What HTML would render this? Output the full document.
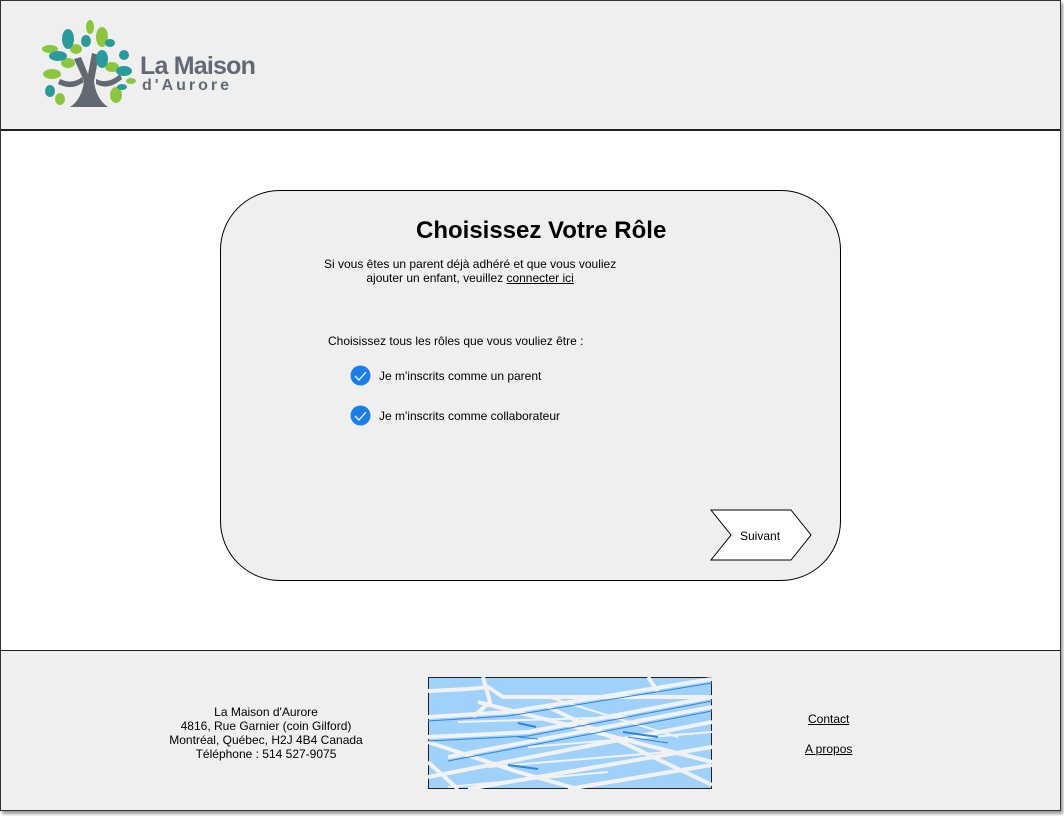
<!DOCTYPE html>
<html><head><meta charset="utf-8"><style>
*{margin:0;padding:0;box-sizing:border-box}
body{width:1064px;height:816px;background:#fff;font-family:"Liberation Sans",Arial,sans-serif;position:relative;overflow:hidden;color:#000}
.frame{position:absolute;left:0;top:0;width:1061px;height:811px;border:1px solid #333;box-shadow:2px 3px 3px #999;background:#fff}
.header{position:absolute;left:1px;top:1px;width:1059px;height:130px;background:#efefef;border-bottom:2px solid #222}
.footer{position:absolute;left:1px;top:650px;width:1059px;height:160px;background:#efefef;border-top:1px solid #222}
.card{position:absolute;left:220px;top:190px;width:621px;height:391px;border:1px solid #000;border-radius:60px;background:#efefef}
.t{position:absolute;font-size:12px;white-space:nowrap}
a{color:#000;text-decoration:underline}
</style></head><body>
<div class="frame"></div>
<div class="header">
<svg style="position:absolute;left:37px;top:18px" width="100" height="92" viewBox="0 0 100 92">
<path d="M32 88 Q44 80 46 62 L36 40 L43 38 L50 55 L54 34 L61 36 L56 62 Q58 80 70 88 Z" fill="#636973"/>
<path d="M22 60 Q34 66 44 58 L46 63 Q34 72 20 65Z" fill="#636973"/>
<path d="M82 55 Q70 66 58 60 L58 65 Q70 72 84 60Z" fill="#636973"/>
<g fill="#8cc63f"><ellipse cx="12" cy="30" rx="8" ry="4"/><ellipse cx="14" cy="55" rx="9" ry="5"/><ellipse cx="30" cy="44" rx="7" ry="5"/><ellipse cx="52" cy="8" rx="4" ry="7"/><ellipse cx="64" cy="18" rx="6" ry="10"/><ellipse cx="74" cy="48" rx="7" ry="5"/><ellipse cx="78" cy="76" rx="6" ry="8"/><ellipse cx="38" cy="30" rx="6" ry="5"/><ellipse cx="22" cy="80" rx="5" ry="6"/><ellipse cx="93" cy="62" rx="5" ry="3"/></g>
<g fill="#2b9a9a"><ellipse cx="30" cy="20" rx="6" ry="10"/><ellipse cx="20" cy="37" rx="9" ry="5"/><ellipse cx="48" cy="22" rx="5" ry="6"/><ellipse cx="64" cy="40" rx="6" ry="9"/><ellipse cx="86" cy="36" rx="5" ry="5"/><ellipse cx="86" cy="52" rx="8" ry="5"/><ellipse cx="12" cy="72" rx="5" ry="6"/><ellipse cx="84" cy="68" rx="5" ry="3"/><ellipse cx="72" cy="24" rx="5" ry="4"/></g>
</svg>
<div style="position:absolute;left:139px;top:51px;font-size:25px;font-weight:bold;color:#636973;letter-spacing:-0.8px">La Maison</div>
<div style="position:absolute;left:141px;top:76px;font-size:16px;font-weight:bold;color:#636973;letter-spacing:3px">d'Aurore</div>
</div>

<div class="card"></div>
<div class="t" style="left:416px;top:217px;font-size:24px;font-weight:bold">Choisissez Votre Rôle</div>
<div class="t" style="left:324px;top:257px;text-align:center;line-height:14px">Si vous êtes un parent déjà adhéré et que vous vouliez<br>ajouter un enfant, veuillez <a>connecter ici</a></div>
<div class="t" style="left:328px;top:334px">Choisissez tous les rôles que vous vouliez être :</div>
<svg style="position:absolute;left:350px;top:365px" width="22" height="62">
<circle cx="10.5" cy="10.5" r="10" fill="#1b7de8"/><path d="M5 11 L9 15 L16 7" stroke="#fff" stroke-width="1.3" fill="none"/>
<circle cx="10.5" cy="50.5" r="10" fill="#1b7de8"/><path d="M5 51 L9 55 L16 47" stroke="#fff" stroke-width="1.3" fill="none"/>
</svg>
<div class="t" style="left:379px;top:369px">Je m'inscrits comme un parent</div>
<div class="t" style="left:379px;top:409px">Je m'inscrits comme collaborateur</div>
<svg style="position:absolute;left:709px;top:509px" width="105" height="54"><polygon points="2,1 82,1 102,26 82,51 2,51 22,26" fill="#fff" stroke="#000"/></svg>
<div class="t" style="left:740px;top:529px">Suivant</div>

<div class="footer">
<div class="t" style="left:150px;top:54px;width:230px;text-align:center;line-height:14px">La Maison d'Aurore<br>4816, Rue Garnier (coin Gilford)<br>Montréal, Québec, H2J 4B4 Canada<br>Téléphone : 514 527-9075</div>
<svg style="position:absolute;left:427px;top:26px" width="284" height="112" viewBox="0 0 284 112">
<rect x="0.5" y="0.5" width="283" height="111" fill="#9fd1fb" stroke="#222"/>
<g stroke="#f2f2f2" stroke-width="4" fill="none">
<path d="M0 14 L40 12 L60 10 L75 20 L284 20"/>
<path d="M55 0 L62 25 L45 40"/>
<path d="M220 0 L230 15"/>
<path d="M0 40 L80 35 L284 2"/>
<path d="M0 60 L100 55 L284 20"/>
<path d="M20 80 L284 30"/>
<path d="M0 100 L284 45"/>
<path d="M40 112 L284 70"/>
<path d="M140 112 L284 88"/>
<path d="M0 65 L90 95 L150 112"/>
<path d="M50 25 L284 85"/>
<path d="M120 30 L284 108"/>
<path d="M0 85 L30 112"/>
</g>
<g stroke="#f2f2f2" stroke-width="2" fill="none">
<path d="M30 45 L200 40"/><path d="M100 70 L284 55"/><path d="M60 90 L240 75"/><path d="M120 20 L250 60"/><path d="M20 110 L180 95"/>
</g>
<g stroke="#2b86e0" stroke-width="1" fill="none"><path d="M0 44 L80 39 L284 6"/><path d="M0 64 L100 59 L284 24"/><path d="M20 84 L284 34"/><path d="M90 60 L110 62"/><path d="M200 60 L240 66"/></g>
<g stroke="#2b86e0" stroke-width="2"><path d="M90 46 L108 50"/><path d="M195 55 L230 60"/><path d="M80 88 L110 92"/></g>
</svg>
<div class="t" style="left:807px;top:61px"><a>Contact</a></div>
<div class="t" style="left:804px;top:91px"><a>A propos</a></div>
</div>
</body></html>
